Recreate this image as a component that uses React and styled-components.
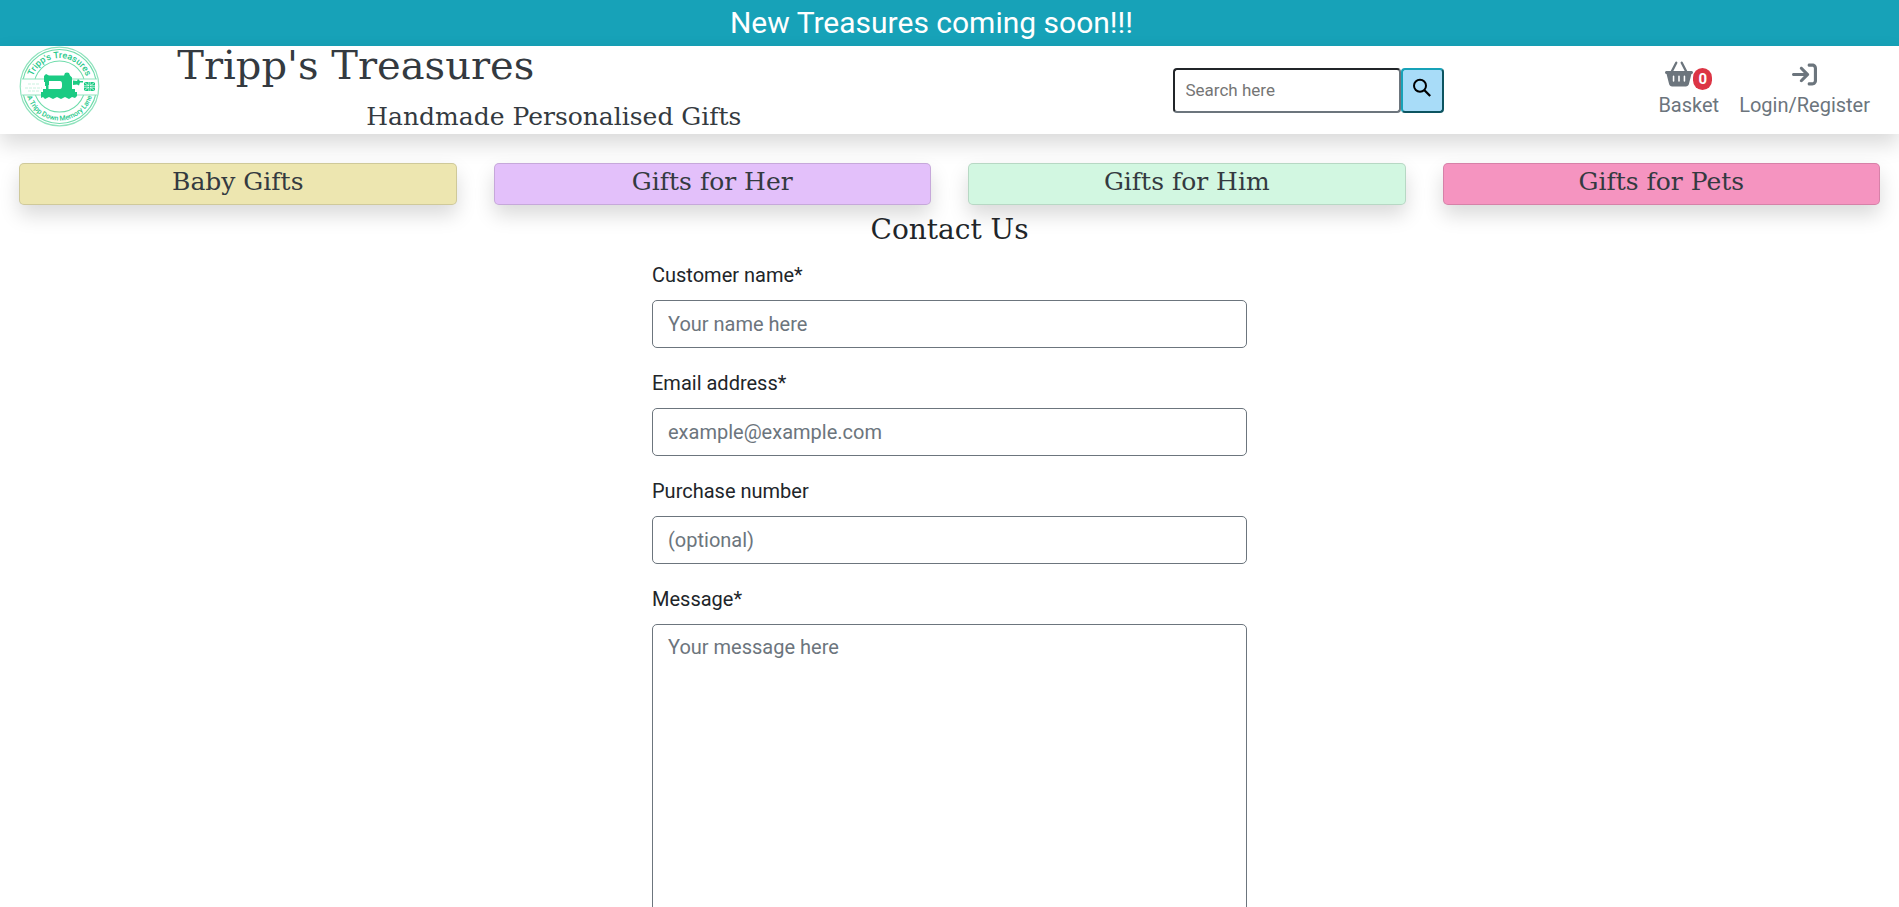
import React from "react";
import styled, { createGlobalStyle } from "styled-components";
import { FaBasketShopping, FaArrowRightToBracket } from "react-icons/fa6";

const typewriter = `"DejaVu Serif", serif`;
const shadow = "0 10px 20px rgba(0, 0, 0, 0.15)";

const GlobalStyle = createGlobalStyle`
  *, *::before, *::after { box-sizing: border-box; }
  body {
    margin: 0;
    background: #fff;
    color: #212529;
    font-family: Roboto, sans-serif;
    font-size: 20px;
    line-height: 28px;
  }
  h1, h2, p { margin: 0; font-weight: 400; }
  a { color: inherit; text-decoration: none; }
`;

const Banner = styled.div`
  padding: 0 36px 0 0;
  background: #17a2b8;
  color: #fff;
  font-size: 30px;
  line-height: 46px;
  text-align: center;
`;

const Header = styled.header`
  display: grid;
  grid-template-columns: 1fr 5fr 4fr 2fr;
  height: 88px;
  background: #fff;
  box-shadow: ${shadow};
`;

const LogoLink = styled.a`
  display: block;
  padding-left: 19px;
  svg { display: block; width: 81px; height: 81px; }
`;

const Brand = styled.div`
  display: flex;
  flex-direction: column;
  justify-content: space-between;
  padding: 0 19px 3px 19px;
  color: #343a40;
  font-family: ${typewriter};
`;

const Title = styled.h1`
  font-size: 40px;
  line-height: 38px;
`;

const Tagline = styled.p`
  font-size: 25px;
  line-height: 28px;
  text-align: center;
`;

const Search = styled.form`
  display: flex;
  align-items: center;
  justify-content: center;
  padding-left: 84px;
`;

const SearchInput = styled.input`
  width: 228px;
  height: 45px;
  padding: 0 11px;
  border: 2px solid;
  border-color: #212529 #6c757d #6c757d #212529;
  border-radius: 4px;
  font: 17px Roboto, sans-serif;
  &::placeholder { color: #757575; }
`;

const SearchButton = styled.button`
  display: flex;
  align-items: center;
  justify-content: center;
  width: 43px;
  height: 45px;
  padding: 0 0 4px;
  border: 2px solid;
  border-color: #17a2b8 #0c5460 #0c5460 #17a2b8;
  border-radius: 4px;
  background: #a8dcf8;
  color: #000;
`;

const Account = styled.nav`
  display: flex;
  align-items: center;
  justify-content: flex-end;
  gap: 20px;
  padding-right: 29px;
  color: #6c757d;
`;

const AccountLink = styled.a`
  display: flex;
  flex-direction: column;
  align-items: center;
  line-height: 32px;
`;

const IconRow = styled.span`
  display: flex;
  align-items: center;
  height: 30px;
`;

const Badge = styled.span`
  padding: 0 5px;
  margin-top: 10px;
  border-radius: 10px;
  background: #dc3545;
  color: #fff;
  font-size: 15px;
  font-weight: 700;
  line-height: 22px;
`;

const Categories = styled.nav`
  display: grid;
  grid-template-columns: repeat(4, 1fr);
  gap: 37px;
  padding: 29px 19px 0;
`;

const Category = styled.a`
  height: 42px;
  border: 1px solid rgba(0, 0, 0, 0.125);
  border-radius: 5px;
  background: ${(p) => p.$color};
  box-shadow: ${shadow};
  color: #343a40;
  font-family: ${typewriter};
  font-size: 25px;
  line-height: 36px;
  text-align: center;
`;

const Main = styled.main`
  display: flex;
  flex-direction: column;
  align-items: center;
`;

const PageTitle = styled.h2`
  padding-top: 8px;
  font-family: ${typewriter};
  font-size: 28px;
  line-height: 34px;
`;

const ContactForm = styled.form`
  display: flex;
  flex-direction: column;
  gap: 21px;
  width: calc(100% / 3 - 38px);
  padding: 14px 0 40px;
`;

const Field = styled.div`
  display: flex;
  flex-direction: column;
  gap: 11px;
`;

const Control = styled.input`
  width: 100%;
  height: ${(p) => p.$height || 48}px;
  padding: 8px 15px;
  border: 1px solid #6c757d;
  border-radius: 5px;
  background: #fff;
  color: #495057;
  font: 20px/28px Roboto, sans-serif;
  resize: vertical;
  &::placeholder { color: #6c757d; opacity: 1; }
`;

const Label = styled.label`
  line-height: 28px;
`;

function SearchIcon() {
  return (
    <svg width="20" height="20" viewBox="0 0 20 20" fill="none" stroke="currentColor" strokeWidth="2" aria-hidden="true">
      <circle cx="8" cy="7.800" r="6" />
      <path d="M12.200 12l6 6" strokeWidth="2.300" />
    </svg>
  );
}

function Logo() {
  return (
    <svg viewBox="0 0 81 81" role="img" aria-label="Tripp's Treasures" fill="none">
      <defs>
        <path id="logoTop" d="M12 40.5a28.500 28.500 0 0 1 57 0" />
        <path id="logoBottom" d="M6.500 40.500a34 34 0 0 0 68 0" />
      </defs>
      <circle cx="40.5" cy="40.5" r="39.3" stroke="#8fe3bd" strokeWidth="1.2" />
      <circle cx="40.5" cy="40.5" r="37" stroke="#6fdcab" strokeWidth="1.2" />
      <circle cx="40.5" cy="40.5" r="25.5" stroke="#6fdcab" strokeWidth="1.1" />
      <path d="M3 33h75v16H3z" fill="#fff" />
      <path d="M3 33h75M3 49h75" stroke="#8fe3bd" strokeWidth="1" />
      <path d="M9 38h11M6 42h17M9 45h12" stroke="#c9f2df" strokeWidth="1" strokeDasharray="3 1" />
      <g fill="#1bcb83">
        <path d="M25 30l2-2 3 1.500h15l1-2.500q2-1 4 0l1 2.500 2 2v11.500h3v4H24v-4h3v-3h-1v-4h-1z" />
        <path d="M22 46h36v4l-2 2-3-1-3 2-4-2-4 2-4-2-4 2-4-2-4 2-2-2-2 1z" />
        <path d="M54 34.500l4 .5 1-2 2 2h3v1.500h-3l-1 3-2-1-4 .5zM65 36h11v9H65z" />
      </g>
      <path d="M30 35h11q2 0 2 3v2q0 3-2 3H29.500v-4h.5z" fill="#fff" />
      <path d="M65 36l11 9M76 36l-11 9" stroke="#fff" strokeWidth=".7" />
      <path d="M70.500 36v9M65 40.500h11" stroke="#fff" strokeWidth="1.800" />
      <path d="M70.500 36v9M65 40.500h11" stroke="#1bcb83" strokeWidth=".8" />
      <g fill="#27c98a" fontFamily="Roboto, sans-serif" fontWeight="500" textAnchor="middle">
        <text fontSize="9">
          <textPath href="#logoTop" startOffset="50%">Tripp's Treasures</textPath>
        </text>
        <text fontSize="7">
          <textPath href="#logoBottom" startOffset="50%">A Tripp Down Memory Lane</textPath>
        </text>
      </g>
    </svg>
  );
}

const categories = [
  ["Baby Gifts", "#ede6b0"],
  ["Gifts for Her", "#e3c0fa"],
  ["Gifts for Him", "#d2f7e1"],
  ["Gifts for Pets", "#f594c0"],
];

const fields = [
  { id: "name", label: "Customer name*", placeholder: "Your name here" },
  { id: "email", label: "Email address*", placeholder: "example@example.com", type: "email" },
  { id: "purchase", label: "Purchase number", placeholder: "(optional)" },
  { id: "message", label: "Message*", placeholder: "Your message here", as: "textarea", $height: 318 },
];

export default function App() {
  return (
    <>
      <GlobalStyle />
      <Banner>New Treasures coming soon!!!</Banner>
      <Header>
        <LogoLink href="#"><Logo /></LogoLink>
        <Brand>
          <Title><a href="#">Tripp's Treasures</a></Title>
          <Tagline>Handmade Personalised Gifts</Tagline>
        </Brand>
        <Search role="search">
          <SearchInput type="text" placeholder="Search here" aria-label="Search here" />
          <SearchButton type="button" aria-label="Search"><SearchIcon /></SearchButton>
        </Search>
        <Account aria-label="Account">
          <AccountLink href="#">
            <IconRow><FaBasketShopping size={28} /><Badge>0</Badge></IconRow>
            Basket
          </AccountLink>
          <AccountLink href="#">
            <IconRow><FaArrowRightToBracket size={25} /></IconRow>
            Login/Register
          </AccountLink>
        </Account>
      </Header>
      <Categories aria-label="Categories">
        {categories.map(([name, color]) => (
          <Category key={name} href="#" $color={color}>{name}</Category>
        ))}
      </Categories>
      <Main>
        <PageTitle>Contact Us</PageTitle>
        <ContactForm>
          {fields.map(({ label, ...control }) => (
            <Field key={control.id}>
              <Label htmlFor={control.id}>{label}</Label>
              <Control {...control} />
            </Field>
          ))}
        </ContactForm>
      </Main>
    </>
  );
}
